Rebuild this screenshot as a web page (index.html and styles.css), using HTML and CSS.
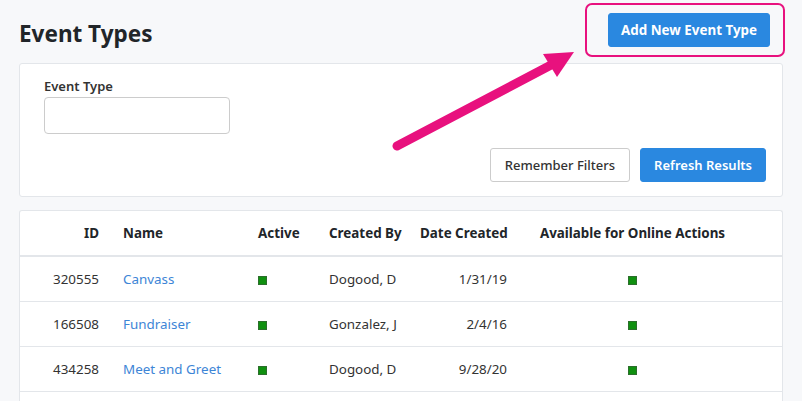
FILE: index.html
```html
<!DOCTYPE html>
<html>
<head>
    <title>Event Types</title>
    <link rel="stylesheet" href="styles.css">
</head>
<body>
    <div class="page-header">
        <h1>Event Types</h1>
        <div class="highlight">
            <button class="btn btn-primary btn-add">Add New Event Type</button>
        </div>
    </div>

    <div class="card filters">
        <label for="event-type">Event Type</label>
        <input type="text" id="event-type">
        <div class="filter-actions">
            <button class="btn btn-default">Remember Filters</button>
            <button class="btn btn-primary btn-refresh">Refresh Results</button>
        </div>
    </div>

    <div class="card results">
        <table>
            <colgroup>
                <col class="col-id">
                <col class="col-name">
                <col class="col-active">
                <col class="col-by">
                <col class="col-date">
                <col class="col-online">
                <col>
            </colgroup>
            <thead>
                <tr>
                    <th class="right">ID</th>
                    <th>Name</th>
                    <th>Active</th>
                    <th>Created By</th>
                    <th class="right">Date Created</th>
                    <th class="center">Available for Online Actions</th>
                    <th></th>
                </tr>
            </thead>
            <tbody>
                <tr>
                    <td class="right">320555</td>
                    <td><a href="#">Canvass</a></td>
                    <td><span class="check"></span></td>
                    <td>Dogood, D</td>
                    <td class="right">1/31/19</td>
                    <td class="center"><span class="check"></span></td>
                    <td></td>
                </tr>
                <tr>
                    <td class="right">166508</td>
                    <td><a href="#">Fundraiser</a></td>
                    <td><span class="check"></span></td>
                    <td>Gonzalez, J</td>
                    <td class="right">2/4/16</td>
                    <td class="center"><span class="check"></span></td>
                    <td></td>
                </tr>
                <tr>
                    <td class="right">434258</td>
                    <td><a href="#">Meet and Greet</a></td>
                    <td><span class="check"></span></td>
                    <td>Dogood, D</td>
                    <td class="right">9/28/20</td>
                    <td class="center"><span class="check"></span></td>
                    <td></td>
                </tr>
                <tr>
                    <td class="right">&nbsp;</td>
                    <td></td>
                    <td></td>
                    <td></td>
                    <td></td>
                    <td></td>
                    <td></td>
                </tr>
            </tbody>
        </table>
    </div>

    <!-- annotation arrow drawn over the page -->
    <svg class="arrow" width="802" height="401" viewBox="0 0 802 401">
        <line x1="397" y1="146" x2="551" y2="65" stroke="#e8117e" stroke-width="9" stroke-linecap="round"/>
        <polygon points="543,54 574,52 557,77" fill="#e8117e"/>
    </svg>
</body>
</html>
```

FILE: styles.css
```css
body {
    margin: 0;
    padding: 0 19px;
    background-color: #f7f8fa;
    font-family: "Noto Sans", "Open Sans", sans-serif;
    font-size: 13.4px;
    color: #333;
    position: relative;
}

.page-header {
    display: flex;
    justify-content: space-between;
    align-items: flex-start;
    padding-top: 13px;
    margin-bottom: 16px;
}

h1 {
    margin: 9px 0 0 0;
    font-size: 22.5px;
    line-height: 24px;
    font-weight: 700;
    color: #212529;
}

.highlight {
    position: relative;
    margin-right: 13px;
}

.highlight::after {
    content: "";
    position: absolute;
    left: -23px;
    right: -15px;
    top: -10px;
    bottom: -10px;
    border: 2px solid #e8117e;
    border-radius: 7px;
}

.btn {
    height: 34px;
    padding: 0 14px;
    border-radius: 3px;
    font-family: inherit;
    font-size: 13px;
    font-weight: 600;
    cursor: pointer;
}

.btn-add {
    padding: 0 12px;
    font-size: 13.4px;
    font-weight: 700;
}

.btn-refresh {
    padding: 0 13px;
}

.btn-primary {
    background-color: #2a88e0;
    border: 1px solid #2a88e0;
    color: #fff;
}

.btn-default {
    background-color: #fff;
    border: 1px solid #ccc;
    color: #333;
    font-weight: 500;
}

.card {
    background-color: #fff;
    border: 1px solid #e3e6ea;
    border-radius: 3px;
}

.filters {
    display: flex;
    flex-direction: column;
    align-items: flex-start;
    padding: 12px 16px 14px 24px;
}

.filters label {
    font-size: 13px;
    font-weight: 600;
    line-height: 21px;
    color: #333;
}

.filters input {
    width: 186px;
    height: 37px;
    box-sizing: border-box;
    border: 1px solid #ccc;
    border-radius: 4px;
}

.filter-actions {
    align-self: flex-end;
    display: flex;
    gap: 10px;
    margin-top: 14px;
}

.results {
    margin-top: 13px;
    border-bottom: none;
}

table {
    width: 100%;
    border-collapse: collapse;
    table-layout: fixed;
}

.col-id { width: 91px; }
.col-name { width: 135px; }
.col-active { width: 71px; }
.col-by { width: 91px; }
.col-date { width: 111px; }
.col-online { width: 227px; }

th, td {
    padding: 0 12px;
    text-align: left;
    white-space: nowrap;
}

th {
    height: 44px;
    font-weight: 700;
    color: #212529;
    border-bottom: 2px solid #e3e6ea;
}

td {
    height: 44px;
    border-bottom: 1px solid #e3e6ea;
}

.right { text-align: right; }
.center { text-align: center; }

a {
    color: #3d85d6;
    text-decoration: none;
}

.check {
    display: inline-block;
    width: 9px;
    height: 9px;
    box-sizing: border-box;
    background-color: #109010;
    border: 1px solid #2c6e2c;
    vertical-align: middle;
}

.arrow {
    position: absolute;
    top: 0;
    left: 0;
    pointer-events: none;
}
```
